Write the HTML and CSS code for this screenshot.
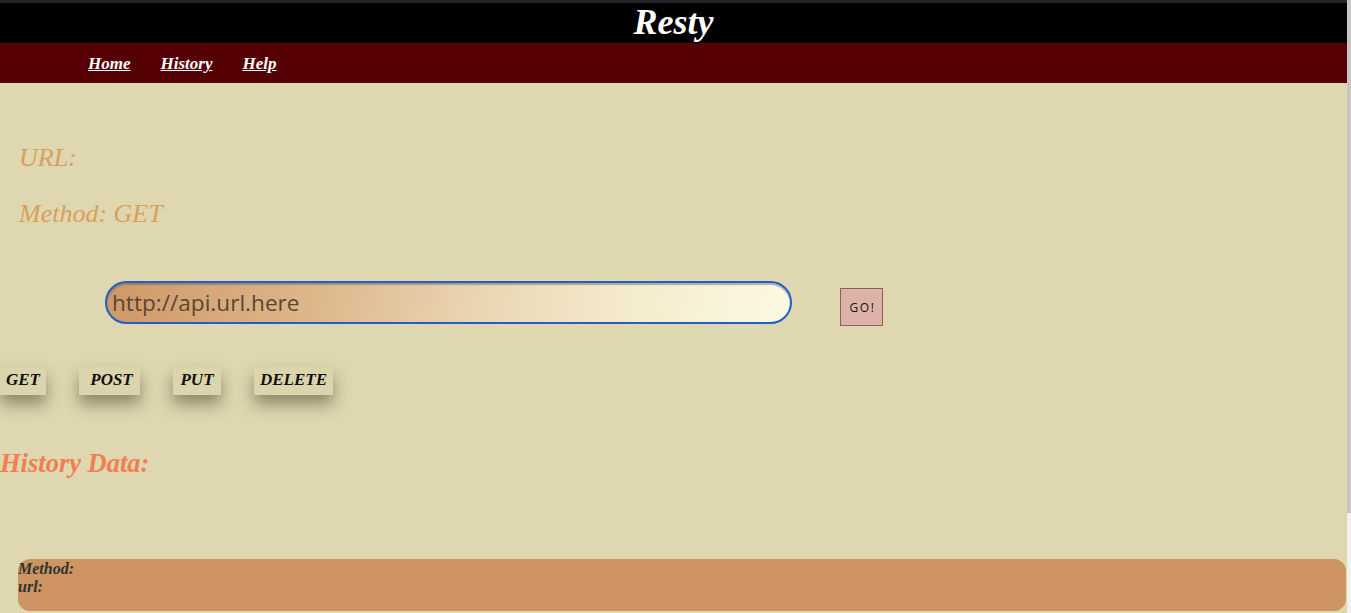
FILE: index.html
```html
<!DOCTYPE html>
<html lang="en">
<head>
<meta charset="utf-8">
<title>Resty</title>
<link rel="stylesheet" href="styles.css">
</head>
<body>
<header class="top">
  <h1 class="brand">Resty</h1>
</header>
<nav class="nav">
  <a class="nav-link" href="#">Home</a>
  <a class="nav-link" href="#">History</a>
  <a class="nav-link" href="#">Help</a>
</nav>
<main class="main">
  <div class="info">
    <p class="label">URL:</p>
    <p class="label">Method: GET</p>
  </div>
  <form class="url-row">
    <input class="url-input" type="text" placeholder="http://api.url.here">
    <button class="go" type="button">GO!</button>
  </form>
  <div class="methods">
    <span class="method m-get">GET</span>
    <span class="method m-post">POST</span>
    <span class="method m-put">PUT</span>
    <span class="method m-delete">DELETE</span>
  </div>
  <h2 class="history-title">History Data:</h2>
  <div class="history-card">
    <div class="history-line">Method:</div>
    <div class="history-line">url:</div>
  </div>
</main>
<div class="scrollbar"><div class="scrollbar-thumb"></div></div>
</body>
</html>
```
FILE: styles.css
```css
body {
  margin: 0 4px 0 0;
  background: #dfd7b0;
  font-family: "Liberation Serif", "Times New Roman", serif;
  padding-bottom: 120px;
}

.scrollbar {
  position: fixed;
  top: 0;
  right: 0;
  width: 4px;
  height: 100%;
  background: #f1f1f1;
}

.scrollbar-thumb {
  height: 513px;
  background: #c6c6c6;
}

.top {
  background: #000;
  border-top: 3px solid #25252d;
  height: 40px;
  display: flex;
  justify-content: center;
  align-items: center;
}

.brand {
  margin: 0;
  color: #fff;
  font-style: italic;
  font-weight: bold;
  font-size: 36px;
  line-height: 40px;
  position: relative;
  top: -1px;
}

.nav {
  background: #550004;
  height: 40px;
  display: flex;
  align-items: center;
  padding-left: 88px;
  gap: 30px;
}

.nav-link {
  color: #fff;
  font-style: italic;
  font-weight: bold;
  font-size: 17px;
  text-decoration: underline;
  position: relative;
  top: 1px;
}

.main {
  padding-top: 60px;
}

.info {
  padding-left: 19px;
}

.label {
  margin: 0 0 26px 0;
  color: #d9a05a;
  font-style: italic;
  font-size: 26px;
  line-height: 30px;
}

.label:last-child {
  margin-bottom: 0;
}

.url-row {
  margin: 52px 0 0 105px;
  display: flex;
  align-items: flex-start;
}

.url-input {
  box-sizing: border-box;
  width: 687px;
  height: 43px;
  border: 2px solid #1f5fcb;
  border-radius: 22px;
  padding: 0 5px;
  font-family: "Open Sans", "Liberation Sans", sans-serif;
  font-size: 22.6px;
  color: #5b4633;
  background: linear-gradient(100deg, #cf9866 0%, #ddb68a 30%, #ead6b3 55%, #f4eacb 75%, #fbf9e3 100%);
  box-shadow: inset 0 2px 1px rgba(90, 90, 100, 0.45);
  outline: none;
}

.url-input::placeholder {
  color: #5b4633;
  opacity: 1;
}

.go {
  margin: 7px 0 0 48px;
  box-sizing: border-box;
  width: 43px;
  height: 38px;
  background: #ddb3a9;
  border: 1px solid #866458;
  padding: 0 0 0 2px;
  font-family: "Open Sans", "Liberation Sans", sans-serif;
  font-size: 12px;
  letter-spacing: 1.6px;
  color: #141010;
}

.methods {
  margin-top: 41px;
  display: flex;
  gap: 33px;
}

.method {
  box-sizing: border-box;
  height: 28px;
  line-height: 25px;
  text-align: center;
  background: #dcd4ad;
  font-style: italic;
  font-weight: bold;
  font-size: 17px;
  color: #111;
  box-shadow: 0 9px 16px rgba(60, 55, 30, 0.5);
}

.m-get { width: 46px; }
.m-post { width: 61px; padding-left: 4px; }
.m-put { width: 48px; }
.m-delete { width: 79px; }

.history-title {
  margin: 53px 0 0 0;
  color: #f17f51;
  font-style: italic;
  font-weight: bold;
  font-size: 26.5px;
  line-height: 30px;
}

.history-card {
  margin: 81px 1px 0 18px;
  background: #ce9462;
  border-radius: 12px;
  padding: 1px 0 15px 0;
}

.history-line {
  font-style: italic;
  font-weight: bold;
  font-size: 16px;
  line-height: 18px;
  color: #2c3530;
}
```
